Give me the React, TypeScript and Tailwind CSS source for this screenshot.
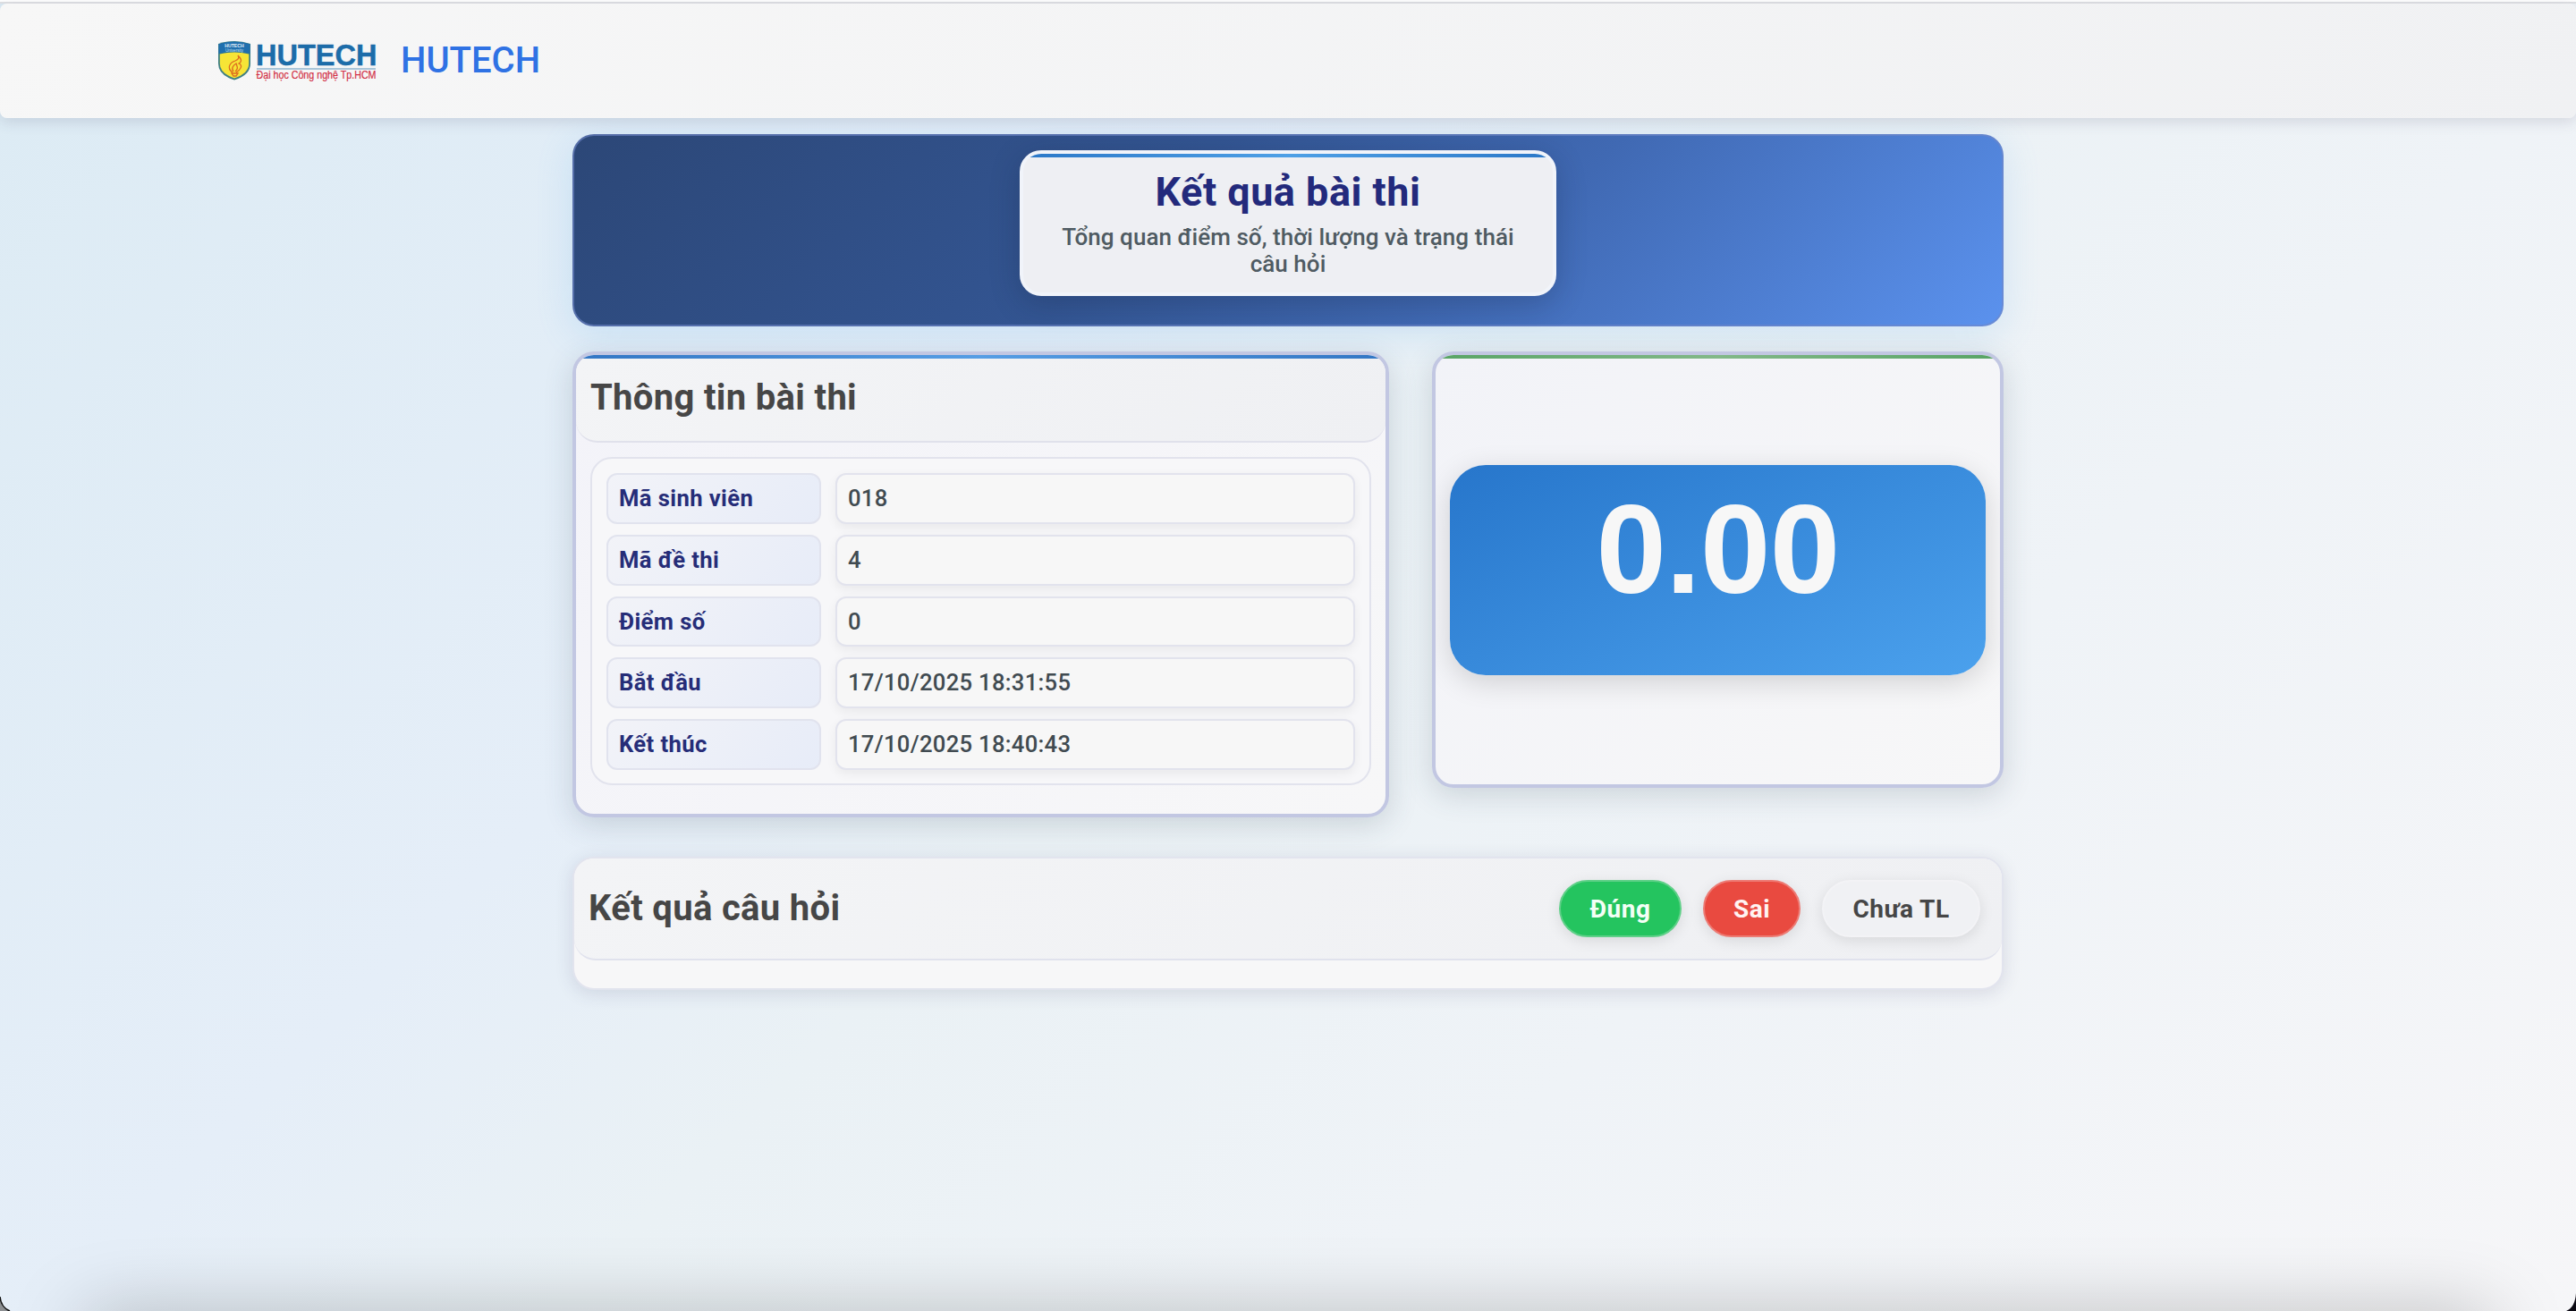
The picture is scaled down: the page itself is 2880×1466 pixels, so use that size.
import React from "react";

const rows = [
  ["Mã sinh viên", "018"],
  ["Mã đề thi", "4"],
  ["Điểm số", "0"],
  ["Bắt đầu", "17/10/2025 18:31:55"],
  ["Kết thúc", "17/10/2025 18:40:43"],
];

function Logo() {
  return (
    <svg className="block h-[52px] w-[184px] overflow-visible" viewBox="0 0 184 52">
      <path d="M0 7Q18 1 36 7V29Q36 42 18 47.500Q0 42 0 29Z" fill="#3f7f83" />
      <path d="M0.500 7.300Q18 1.500 35.500 7.300V18Q18 14 0.500 18Z" fill="#1f6fae" />
      <path d="M1.800 18.500Q18 14.500 34.200 18.500V29Q34.200 40 18 45.500Q1.800 40 1.800 29Z" fill="#f6e436" />
      <text x="18" y="11" textAnchor="middle" fontFamily="Liberation Sans" fontWeight="700" fontSize="5.200" fill="#e8f4fb">HUTECH</text>
      <text x="18" y="16" textAnchor="middle" fontFamily="Liberation Sans" fontSize="4.600" fill="#c5e0f1">University</text>
      <path d="M16 39C9 34 13 28 19 26C24 24 23 22 22 20C27 25 26 27 23 29C28 31 25 36 20 39M17 38C14 34 17 31 20 29C21 33 23 34 19 38M15 40H22L20 43H17Z" fill="none" stroke="#dd6b20" strokeWidth="1.300" />
      <text x="42" y="31" fontFamily="Liberation Sans" fontWeight="700" fontSize="32.500" fill="#1c6ca9" stroke="#1c6ca9" strokeWidth="0.500">HUTECH</text>
      <path d="M43 35H176" stroke="#8fb4cf" strokeWidth="1.500" />
      <text x="42.500" y="45.500" textLength="134" lengthAdjust="spacingAndGlyphs" fontFamily="Liberation Sans" fontSize="12.500" fill="#d22f45" stroke="#d22f45" strokeWidth="0.200">Đại học Công nghệ Tp.HCM</text>
    </svg>
  );
}

export default function App() {
  return (
    <div className="relative h-[1466px] w-full overflow-hidden bg-[linear-gradient(135deg,#dcebf4_0%,#e5eef8_35%,#eaf1f5_48%,#eff3f7_68%,#f6f6f8_100%)] pt-1 font-['Roboto',sans-serif] text-[#414b51]">
      <div className="absolute inset-x-0 top-0 h-0.5 bg-white" />
      <div className="absolute inset-x-0 top-0.5 h-0.5 bg-[#dfe0e3]" />
      <header className="relative flex h-32 items-center gap-5 rounded-lg bg-[linear-gradient(135deg,#f7f7f7,#f0f1f3)] pl-[244px] shadow-[0_4px_16px_rgba(60,60,100,0.16)]">
        <Logo />
        <span className="text-[40px] leading-none font-medium text-[#2f72e4]">HUTECH</span>
      </header>

      <main className="mx-auto w-[1600px] pt-[18px]">
        <section className="flex h-[215px] justify-center rounded-3xl border-2 border-[#6f87c8]/60 bg-[linear-gradient(135deg,#2c4777_0%,#335592_40%,#4069b3_65%,#5b92ee_100%)] bg-origin-border pt-4 shadow-[0_8px_40px_rgba(90,175,240,0.2)]">
          <div className="relative h-[163px] w-[600px] overflow-hidden rounded-3xl border-4 border-[#f1f4fa] bg-[#eeeff3] px-9 pt-5 text-center shadow-[0_8px_32px_rgba(20,30,60,0.25)]">
            <div className="absolute inset-x-0 top-0 h-1 bg-[linear-gradient(90deg,#2b78c8,#4ea0e6,#2b78c8)]" />
            <h1 className="text-[45px] leading-[46px] font-bold tracking-[0.011em] text-[#232a7c]">Kết quả bài thi</h1>
            <p className="mt-[12px] text-[26px] leading-[30px] font-medium tracking-[0.05px] text-[#4f5b62]">Tổng quan điểm số, thời lượng và trạng thái câu hỏi</p>
          </div>
        </section>

        <div className="mt-7 flex items-start justify-between">
          <section className="relative h-[521px] w-[913px] overflow-hidden rounded-3xl border-4 border-[#c2c7e2] bg-[linear-gradient(135deg,#f3f3f9,#f7f7f8)] shadow-[0_8px_32px_rgba(50,70,90,0.18)]">
            <div className="absolute inset-x-0 top-0 h-1 bg-[linear-gradient(90deg,#3276c4,#559de4,#3276c4)]" />
            <div className="h-[98px] rounded-b-3xl border-b-2 border-[#e0e1eb] bg-[linear-gradient(135deg,#f3f4f6,#eff0f3)] pt-6 pl-4">
              <h2 className="text-[40px] leading-[48px] font-bold tracking-[0.33px] text-[#464646]">Thông tin bài thi</h2>
            </div>
            <div className="mx-4 mt-4 flex h-[367px] flex-col gap-3 rounded-3xl border-2 border-[#e2e3ed] bg-[#f7f7f9] px-4 pt-4">
              {rows.map(([label, value]) => (
                <div key={label} className="grid h-[56.8px] grid-cols-[240px_1fr] gap-4 text-[25.6px] leading-[52px] tracking-[0.012em]">
                  <div className="rounded-xl border-2 border-[#e1e3ee] bg-[linear-gradient(135deg,#f2f3f8,#e7ecf8)] pl-3 font-bold tracking-[0.016em] text-[#262d78]">{label}</div>
                  <div className="rounded-xl border-2 border-[#e2e3ed] bg-[#f7f7f7] pl-3 font-medium shadow-[0_4px_12px_rgba(0,0,0,0.06)]">{value}</div>
                </div>
              ))}
            </div>
          </section>

          <section className="relative flex h-[488px] w-[639px] items-center overflow-hidden rounded-3xl border-4 border-[#c2c7e2] bg-[linear-gradient(135deg,#f2f3f8,#f7f7f8)] px-4 shadow-[0_8px_32px_rgba(50,70,90,0.18)]">
            <div className="absolute inset-x-0 top-0 h-1 bg-[linear-gradient(90deg,#58a465,#82b888,#58a465)]" />
            <div className="flex h-[235px] w-full justify-center rounded-[40px] bg-[linear-gradient(155deg,#2776cb,#4ba1ed)] pt-[23px] font-['Liberation_Sans',sans-serif] text-[141px] leading-[142px] font-bold tracking-[-0.6px] text-[#f7f7f7] shadow-[0_8px_32px_rgba(0,0,0,0.15)]">0.00</div>
          </section>
        </div>

        <section className="mt-[44px] h-[149px] overflow-hidden rounded-3xl border-2 border-[#e2e4ee] bg-[#f7f7f8] shadow-[0_4px_20px_rgba(60,60,100,0.14)]">
          <div className="flex h-[114px] items-center justify-between rounded-b-3xl border-b-2 border-[#e0e2ed] bg-[linear-gradient(135deg,#f3f4f6,#eff0f3)] pr-6 pl-4">
            <h2 className="text-[40px] leading-[48px] font-bold tracking-[0.33px] text-[#464646]">Kết quả câu hỏi</h2>
            <div className="flex gap-6 text-[28px] leading-[61px] font-bold tracking-[0.5px]">
              <span className="h-16 w-[137px] rounded-full border-2 border-[#5fd088] bg-[#24c45f] text-center text-[#f3fff6] shadow-[0_4px_16px_rgba(0,0,0,0.1)]">Đúng</span>
              <span className="h-16 w-[109px] rounded-full border-2 border-[#ed7b74] bg-[#e94a40] text-center text-[#fff3f2] shadow-[0_4px_16px_rgba(0,0,0,0.1)]">Sai</span>
              <span className="h-16 w-[177px] rounded-full border-2 border-[#f3f3f6] bg-[#f0f1f4] text-center text-[#464646] shadow-[0_4px_16px_rgba(0,0,0,0.1)]">Chưa TL</span>
            </div>
          </div>
        </section>
      </main>

      <div className="absolute right-[95px] -bottom-[60px] left-[95px] h-[60px] shadow-[0_6px_84px_0_rgba(0,0,0,0.27)]" />
      <svg className="absolute bottom-0 left-0 h-5 w-4" viewBox="0 0 16 20"><path d="M0 4Q0 17 11 20H0Z" fill="#8c8f92" /><path d="M0 4Q1 16 11 20" fill="none" stroke="#111" strokeWidth="1.500" /></svg>
      <svg className="absolute right-0 bottom-0 h-5 w-4" viewBox="0 0 16 20"><path d="M16 0Q15 16 5 20H16Z" fill="#0c0a14" /></svg>
    </div>
  );
}
